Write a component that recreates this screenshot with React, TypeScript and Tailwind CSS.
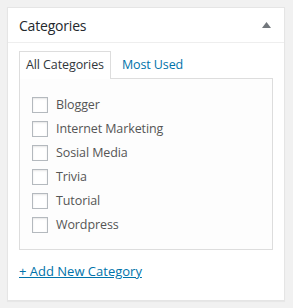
const categories = ["Blogger", "Internet Marketing", "Sosial Media", "Trivia", "Tutorial", "Wordpress"]

export default function App() {
  return (
    <div className="w-[293px] h-[308px] bg-[#f1f1f1] pt-[7px] pl-[7px] font-['Segoe_UI','Open_Sans',sans-serif]">
      <div className="w-[278px] h-[294px] bg-white border border-[#e5e5e5] shadow-[0_1px_1px_rgba(0,0,0,0.04)]">
        <div className="h-[35px] flex items-center justify-between pl-[11px] pr-[13px] border-b border-[#eeeeee]">
          <h2 className="text-[14px] tracking-[-0.2px] text-[#23282d]">Categories</h2>
          <svg width="9" height="6" viewBox="0 0 9 6">
            <path d="M4.5 0 L9 6 L0 6 Z" fill="#72777c" />
          </svg>
        </div>
        <div className="pl-[11px] pt-[8px]">
          <div className="flex items-end h-[28px] text-[12.5px] tracking-[-0.1px]">
            <div className="h-[28px] px-[6px] bg-white border border-b-0 border-[#dddddd] text-[#32373c] flex items-center relative z-10">
              All Categories
            </div>
            <a className="ml-[11px] text-[#0073aa] h-[28px] flex items-center">Most Used</a>
          </div>
          <div className="w-[254px] h-[172px] -mt-px bg-[#fdfdfd] border border-[#dddddd] pl-[12px] pt-[18px]">
            {categories.map((c, i) => (
              <label key={i} className="flex items-center h-[16px] mb-[8px]">
                <span className="w-[16px] h-[16px] bg-white border border-[#b4b9be] shadow-[inset_0_1px_2px_rgba(0,0,0,0.1)]" />
                <span className="ml-[8px] text-[12.5px] tracking-[-0.1px] text-[#555555]">{c}</span>
              </label>
            ))}
          </div>
          <a className="block mt-[12px] text-[13px] text-[#0073aa] underline">+ Add New Category</a>
        </div>
      </div>
    </div>
  )
}
